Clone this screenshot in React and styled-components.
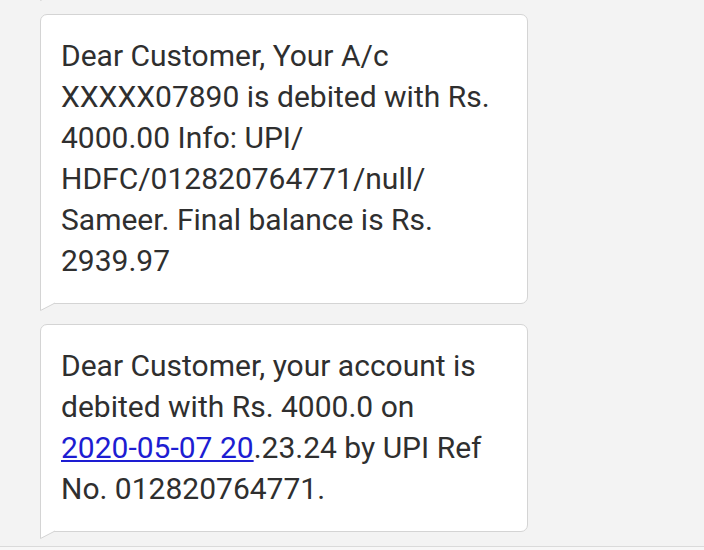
import React from 'react';
import styled, { createGlobalStyle } from 'styled-components';

const GlobalStyle = createGlobalStyle`
  html, body {
    margin: 0;
    padding: 0;
    background: #f3f3f3;
    overflow: hidden;
  }
`

const Screen = styled.div`
  height: 550px;
  display: flex;
  flex-direction: column;
  overflow: hidden;
`

const Thread = styled.div`
  flex: 1;
  display: flex;
  flex-direction: column;
  justify-content: flex-end;
  gap: 20px;
  padding: 0 176px 14px 40px;
  overflow: hidden;
`

const Bubble = styled.div`
  position: relative;
  flex-shrink: 0;
  min-height: ${p => p.$height || 0}px;
  background: #fff;
  border: 1px solid #d4d4d4;
  border-radius: 7px 7px 7px 0;
  padding: 20px 20px 22px 20px;
  font-family: Roboto, "Liberation Sans", sans-serif;
  font-size: 30px;
  line-height: 41px;
  color: #2f2f2f;
`

const Tail = styled.svg`
  position: absolute;
  left: -1px;
  bottom: -8px;
  width: 16px;
  height: 9px;
  overflow: visible;
`

const Link = styled.a`
  color: #1d1dd2;
  text-decoration: underline;
  text-underline-offset: 2px;
  text-decoration-thickness: 2px;
`

const BottomBar = styled.div`
  height: 3px;
  border-top: 1px solid #dadada;
  background: #f7f7f7;
`

const Message = ({ children, height }) => (
  <Bubble $height={height}>
    {children}
    <Tail viewBox="0 0 16 9">
      <polygon points="0,0 0.5,8.5 15,1 15,0" fill="#fff" />
      <polyline points="0.5,0 0.5,8.5 15,1" fill="none" stroke="#d4d4d4" strokeWidth="1" />
    </Tail>
  </Bubble>
)

export default function App() {
  return (
    <Screen>
      <GlobalStyle />
      <Thread>
        <Message height={120} />
        <Message>
          Dear Customer, Your A/c<br />
          XXXXX07890 is debited with Rs.<br />
          4000.00 Info: UPI/<br />
          HDFC/012820764771/null/<br />
          Sameer. Final balance is Rs.<br />
          2939.97
        </Message>
        <Message>
          Dear Customer, your account is<br />
          debited with Rs. 4000.0 on<br />
          <Link href="#">2020-05-07 20</Link>.23.24 by UPI Ref<br />
          No. 012820764771.
        </Message>
      </Thread>
      <BottomBar />
    </Screen>
  )
}
